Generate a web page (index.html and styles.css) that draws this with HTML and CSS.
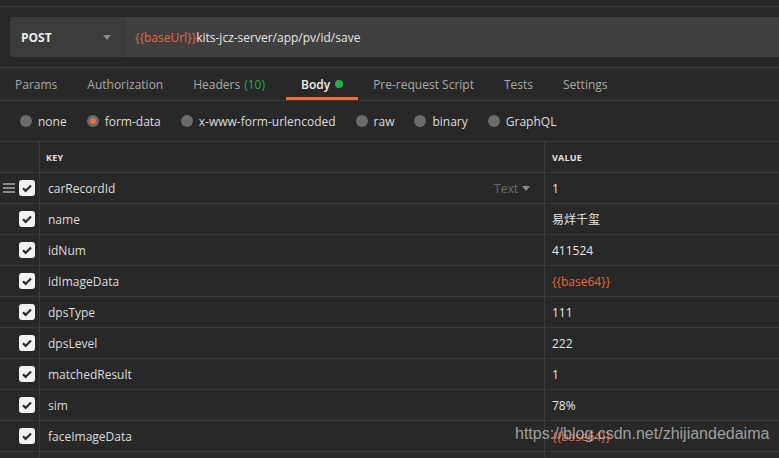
FILE: index.html
```html
<!DOCTYPE html>
<html>
<head>
<meta charset="utf-8">
<link rel="stylesheet" href="styles.css">
</head>
<body>
<div class="app">
  <div class="topstrip"></div>
  <div class="urlrow">
    <div class="urlbar">
      <div class="method"><span>POST</span><span class="caret"></span></div>
      <div class="url"><span class="var">{{baseUrl}}</span>kits-jcz-server/app/pv/id/save</div>
    </div>
  </div>
  <div class="tabs">
    <div class="tab">Params</div>
    <div class="tab">Authorization</div>
    <div class="tab">Headers <span class="count">(10)</span></div>
    <div class="tab active">Body <span class="dot"></span></div>
    <div class="tab">Pre-request Script</div>
    <div class="tab">Tests</div>
    <div class="tab">Settings</div>
  </div>
  <div class="modes">
    <div class="mode"><span class="radio"></span>none</div>
    <div class="mode"><span class="radio on"></span>form-data</div>
    <div class="mode"><span class="radio"></span>x-www-form-urlencoded</div>
    <div class="mode"><span class="radio"></span>raw</div>
    <div class="mode"><span class="radio"></span>binary</div>
    <div class="mode"><span class="radio"></span>GraphQL</div>
  </div>
  <div class="table">
    <div class="row head">
      <div class="c0"></div>
      <div class="c1">KEY</div>
      <div class="c2">VALUE</div>
    </div>
    <div class="row">
      <div class="c0"><span class="handle"><i></i><i></i><i></i></span><span class="cb"><svg viewBox="0 0 16 16" width="16" height="16"><path d="M4 8.3l2.6 2.6L12 5.4" fill="none" stroke="#2a2a2a" stroke-width="2.2"/></svg></span></div>
      <div class="c1"><span>carRecordId</span><span class="type">Text <span class="tcaret"></span></span></div>
      <div class="c2">1</div>
    </div>
    <div class="row">
      <div class="c0"><span class="cb"><svg viewBox="0 0 16 16" width="16" height="16"><path d="M4 8.3l2.6 2.6L12 5.4" fill="none" stroke="#2a2a2a" stroke-width="2.2"/></svg></span></div>
      <div class="c1">name</div>
      <div class="c2">易烊千玺</div>
    </div>
    <div class="row">
      <div class="c0"><span class="cb"><svg viewBox="0 0 16 16" width="16" height="16"><path d="M4 8.3l2.6 2.6L12 5.4" fill="none" stroke="#2a2a2a" stroke-width="2.2"/></svg></span></div>
      <div class="c1">idNum</div>
      <div class="c2">411524</div>
    </div>
    <div class="row">
      <div class="c0"><span class="cb"><svg viewBox="0 0 16 16" width="16" height="16"><path d="M4 8.3l2.6 2.6L12 5.4" fill="none" stroke="#2a2a2a" stroke-width="2.2"/></svg></span></div>
      <div class="c1">idImageData</div>
      <div class="c2 var">{{base64}}</div>
    </div>
    <div class="row">
      <div class="c0"><span class="cb"><svg viewBox="0 0 16 16" width="16" height="16"><path d="M4 8.3l2.6 2.6L12 5.4" fill="none" stroke="#2a2a2a" stroke-width="2.2"/></svg></span></div>
      <div class="c1">dpsType</div>
      <div class="c2">111</div>
    </div>
    <div class="row">
      <div class="c0"><span class="cb"><svg viewBox="0 0 16 16" width="16" height="16"><path d="M4 8.3l2.6 2.6L12 5.4" fill="none" stroke="#2a2a2a" stroke-width="2.2"/></svg></span></div>
      <div class="c1">dpsLevel</div>
      <div class="c2">222</div>
    </div>
    <div class="row">
      <div class="c0"><span class="cb"><svg viewBox="0 0 16 16" width="16" height="16"><path d="M4 8.3l2.6 2.6L12 5.4" fill="none" stroke="#2a2a2a" stroke-width="2.2"/></svg></span></div>
      <div class="c1">matchedResult</div>
      <div class="c2">1</div>
    </div>
    <div class="row">
      <div class="c0"><span class="cb"><svg viewBox="0 0 16 16" width="16" height="16"><path d="M4 8.3l2.6 2.6L12 5.4" fill="none" stroke="#2a2a2a" stroke-width="2.2"/></svg></span></div>
      <div class="c1">sim</div>
      <div class="c2">78%</div>
    </div>
    <div class="row">
      <div class="c0"><span class="cb"><svg viewBox="0 0 16 16" width="16" height="16"><path d="M4 8.3l2.6 2.6L12 5.4" fill="none" stroke="#2a2a2a" stroke-width="2.2"/></svg></span></div>
      <div class="c1">faceImageData</div>
      <div class="c2 var">{{base64}}</div>
    </div>
    <div class="row">
      <div class="c0"></div>
      <div class="c1"></div>
      <div class="c2"></div>
    </div>
  </div>
  <div class="watermark">https://blog.csdn.net/zhijiandedaima</div>
</div>
</body>
</html>
```

FILE: styles.css
```css
html, body {
  margin: 0;
  padding: 0;
  background: #282828;
}
.app {
  position: relative;
  width: 779px;
  height: 458px;
  overflow: hidden;
  background: #282828;
  font-family: "Open Sans", "Noto Sans CJK SC", sans-serif;
  font-size: 12px;
  color: #d8d8d8;
}
.topstrip {
  height: 6px;
  border-bottom: 1px solid #3a3a3a;
}
.urlrow {
  padding: 10px 0 10px 10px;
  border-bottom: 1px solid #3a3a3a;
}
.urlbar {
  display: flex;
  height: 40px;
  background: #404040;
  border-radius: 3px 0 0 3px;
  overflow: hidden;
}
.method {
  width: 115px;
  box-sizing: border-box;
  padding: 0 13px 0 11px;
  display: flex;
  align-items: center;
  justify-content: space-between;
  background: #3b3b3b;
  border-right: 1px solid #353535;
  font-weight: bold;
  color: #ececec;
  font-size: 12px;
}
.caret {
  width: 0;
  height: 0;
  border-left: 4px solid transparent;
  border-right: 4px solid transparent;
  border-top: 5px solid #8a8a8a;
}
.url {
  display: flex;
  align-items: center;
  padding-left: 10px;
  color: #e6e6e6;
}
.var {
  color: #e8693a;
}
.tabs {
  display: flex;
  height: 32px;
  border-bottom: 1px solid #3a3a3a;
}
.tab {
  position: relative;
  padding: 0 15px;
  display: flex;
  align-items: center;
  color: #a8a8a8;
}
.tab .count {
  color: #26a84e;
  margin-left: 4px;
}
.tab.active {
  color: #f0f0f0;
  font-weight: 600;
  margin-left: 6px;
}
.tab.active::after {
  content: "";
  position: absolute;
  left: 0;
  right: 0;
  bottom: 0;
  height: 3px;
  background: #f26b3a;
}
.dot {
  width: 8px;
  height: 8px;
  border-radius: 50%;
  background: #26b14f;
  margin-left: 5px;
}
.modes {
  display: flex;
  align-items: center;
  height: 40px;
  padding-left: 20px;
  gap: 20px;
  border-bottom: 1px solid #3a3a3a;
  color: #dcdcdc;
}
.mode {
  display: flex;
  align-items: center;
}
.radio {
  width: 12px;
  height: 12px;
  border-radius: 50%;
  background: #6b6b6b;
  margin-right: 6px;
  position: relative;
}
.radio.on::after {
  content: "";
  position: absolute;
  left: 3px;
  top: 3px;
  width: 6px;
  height: 6px;
  border-radius: 50%;
  background: #f26b3a;
}
.row {
  display: flex;
  height: 30px;
  border-bottom: 1px solid #3a3a3a;
}
.row.head .c1, .row.head .c2 {
  font-size: 9px;
  font-weight: bold;
  color: #e0e0e0;
  letter-spacing: 0.2px;
}
.row.head .c1 {
  padding-left: 6px;
}
.c0 {
  width: 40px;
  border-right: 1px solid #3a3a3a;
  display: flex;
  align-items: center;
  justify-content: flex-end;
  padding-right: 4px;
  box-sizing: border-box;
  position: relative;
}
.c1 {
  width: 505px;
  box-sizing: border-box;
  border-right: 1px solid #3a3a3a;
  display: flex;
  align-items: center;
  justify-content: space-between;
  padding: 0 14px 0 8px;
  color: #dcdcdc;
}
.c2 {
  flex: 1;
  display: flex;
  align-items: center;
  padding-left: 7px;
  color: #e6e6e6;
}
.c2.var {
  color: #e8693a;
}
.cb {
  width: 16px;
  height: 16px;
  border-radius: 3px;
  background: #f2f2f2;
  display: block;
}
.cb svg {
  display: block;
}
.handle {
  position: absolute;
  left: 3px;
  top: 10px;
  display: flex;
  flex-direction: column;
  gap: 2px;
}
.handle i {
  display: block;
  width: 12px;
  height: 2px;
  background: #8a8a8a;
}
.type {
  color: #6e6e6e;
  display: flex;
  align-items: center;
}
.tcaret {
  width: 0;
  height: 0;
  border-left: 4px solid transparent;
  border-right: 4px solid transparent;
  border-top: 5px solid #8a8a8a;
  margin-left: 4px;
}
.watermark {
  position: absolute;
  left: 515px;
  top: 425px;
  font-family: "Liberation Sans", Arial, sans-serif;
  font-size: 16px;
  color: rgba(200, 200, 200, 0.75);
  white-space: nowrap;
}
```
